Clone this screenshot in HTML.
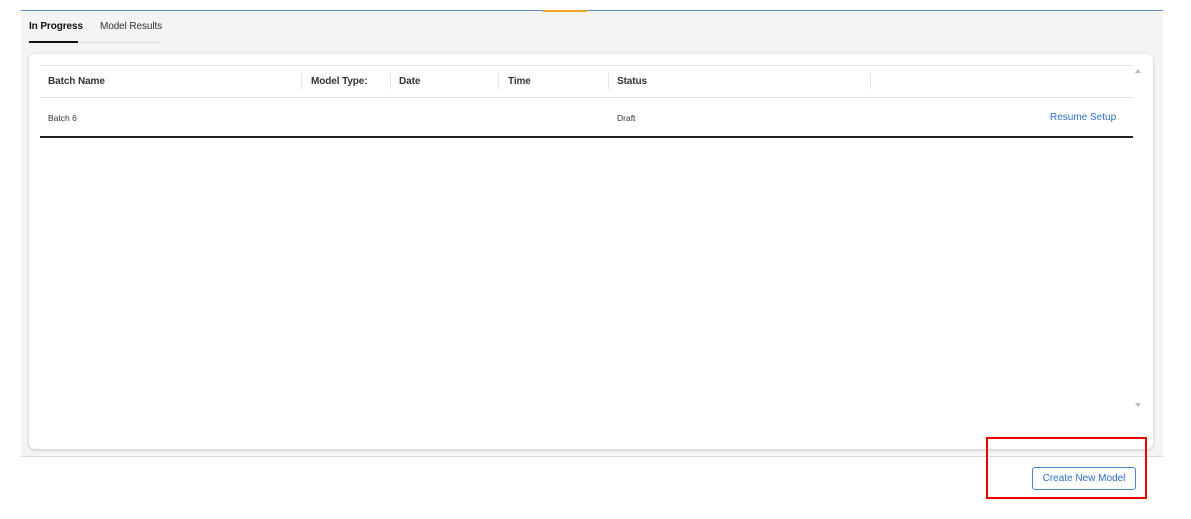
<!DOCTYPE html>
<html><head><style>
body{margin:0;width:1191px;height:519px;background:#fff;font-family:"Liberation Sans",sans-serif;position:relative;overflow:hidden}
.a{position:absolute}
.gray{left:21px;top:10px;width:1142px;height:447px;background:#f4f4f4;border-top:1px solid #5b8fd6;border-bottom:1px solid #dcdcdc;box-sizing:border-box}
.card{left:29px;top:54px;width:1124px;height:395px;background:#fff;border-radius:6px;box-shadow:0 1px 3px rgba(0,0,0,.2)}
.t{font-size:10px;letter-spacing:-0.1px}
.h{font-size:10px;color:#333;font-weight:bold;letter-spacing:-0.1px;-webkit-text-stroke:0}
.sep{width:1px;height:16px;background:#e6e6e6;top:73px}
</style></head><body>
<div class="a gray"></div>
<div class="a" style="left:543px;top:10px;width:44px;height:2px;background:#f5a623"></div>
<div class="a t" style="left:29px;top:21px;color:#111;font-weight:bold">In Progress</div>
<div class="a t" style="left:100px;top:21px;color:#333">Model Results</div>
<div class="a" style="left:29px;top:42px;width:133px;height:1px;background:#ddd"></div>
<div class="a" style="left:29px;top:41px;width:49px;height:2px;background:#111"></div>
<div class="a card"></div>
<div class="a" style="left:40px;top:65px;width:1093px;height:1px;background:#e8e8e8"></div>
<div class="a" style="left:40px;top:97px;width:1093px;height:1px;background:#e3e3e3"></div>
<div class="a" style="left:40px;top:136px;width:1093px;height:2px;background:#222"></div>
<div class="a h" style="left:48px;top:76px">Batch Name</div>
<div class="a sep" style="left:301px"></div>
<div class="a h" style="left:311px;top:76px">Model Type:</div>
<div class="a sep" style="left:390px"></div>
<div class="a h" style="left:399px;top:76px">Date</div>
<div class="a sep" style="left:498px"></div>
<div class="a h" style="left:508px;top:76px">Time</div>
<div class="a sep" style="left:608px"></div>
<div class="a h" style="left:617px;top:76px">Status</div>
<div class="a sep" style="left:870px"></div>
<div class="a" style="left:48px;top:113px;font-size:8.5px;color:#333">Batch 6</div>
<div class="a" style="left:617px;top:113px;font-size:8.5px;color:#333">Draft</div>
<div class="a" style="left:1050px;top:112px;font-size:10px;color:#2e6fc9">Resume Setup</div>
<div class="a" style="left:1135px;top:69px;width:0;height:0;border-left:3px solid transparent;border-right:3px solid transparent;border-bottom:4px solid #bbb"></div>
<div class="a" style="left:1135px;top:403px;width:0;height:0;border-left:3px solid transparent;border-right:3px solid transparent;border-top:4px solid #bbb"></div>
<div class="a" style="left:1032px;top:467px;width:104px;height:23px;border:1px solid #4a86d4;border-radius:3px;box-sizing:border-box;font-size:10px;color:#2e6fc9;text-align:center;line-height:21px">Create New Model</div>
<div class="a" style="left:986px;top:437px;width:161px;height:62px;border:2px solid #e00;box-sizing:border-box"></div>
</body></html>
